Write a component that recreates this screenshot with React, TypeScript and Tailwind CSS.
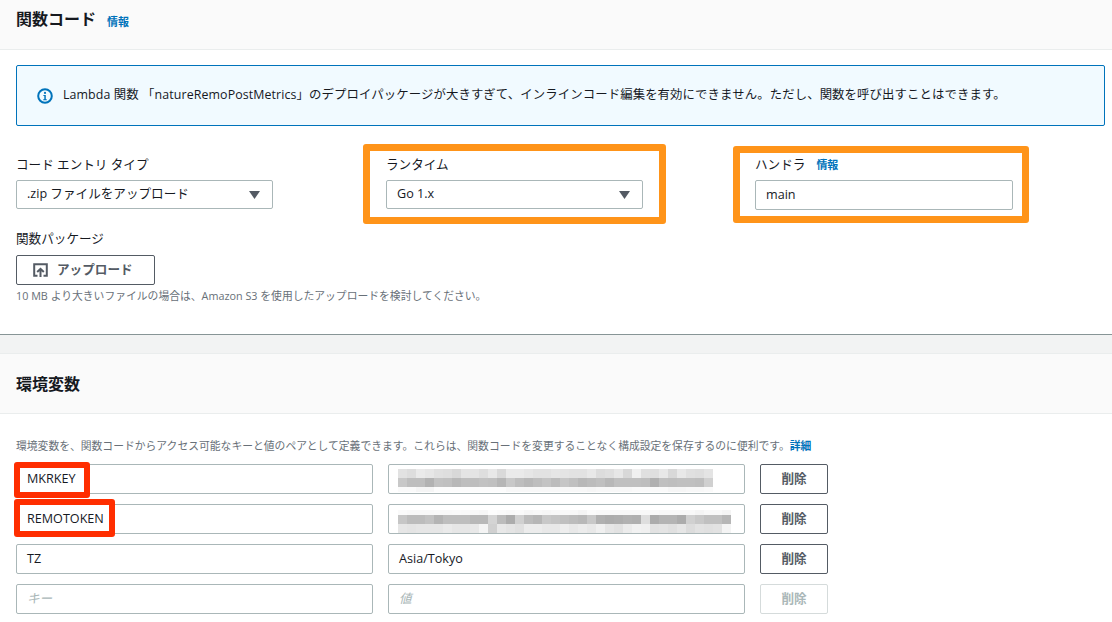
const font = { fontFamily: '"Open Sans", "Noto Sans CJK JP", sans-serif' }

const blurOne = [
  [0xe2, 0xdd, 0xea, 0xe6, 0xe0, 0xde, 0xd8, 0xe4, 0xe4, 0xde, 0xe8, 0xd9, 0xea, 0xea, 0xe6, 0xe2, 0xe2, 0xe6, 0xe4, 0xe2, 0xe2, 0xe8, 0xdc, 0xdf, 0xe7, 0xd8, 0xf0, 0xe0, 0xdf, 0xe8, 0xd8, 0xe8, 0xe0, 0xde, 0xe4],
  [0xc8, 0xbe, 0xbe, 0xb2, 0xc2, 0xc0, 0xb8, 0xbe, 0xbe, 0xc2, 0xc0, 0xb6, 0xc8, 0xbe, 0xb8, 0xbe, 0xc4, 0xbc, 0xc6, 0xc0, 0xb8, 0xbc, 0xc0, 0xb8, 0xc0, 0xc0, 0xc0, 0xbe, 0xb0, 0xc0, 0xbe, 0xc0, 0xc0, 0xbe, 0xd0],
  [0xfa, 0xfa, 0xf5, 0xf5, 0xfc, 0xfc, 0xfc, 0xfc, 0xfc, 0xfc, 0xfc, 0xfc, 0xf8, 0xf8, 0xf8, 0xf8, 0xf8, 0xf8, 0xf8, 0xf8, 0xf8, 0xf6, 0xf8, 0xf8, 0xf8, 0xf8, 0xfa, 0xfa, 0xfa, 0xfa, 0xf6, 0xf6, 0xf8, 0xf8, 0xfa],
]

const blurTwo = [
  [0xfa, 0xf8, 0xf8, 0xf8, 0xf9, 0xf9, 0xfa, 0xf9, 0xf8, 0xf6, 0xfc, 0xfa, 0xf8, 0xfa, 0xf6, 0xf8, 0xf6, 0xf8, 0xf8, 0xf8, 0xf4, 0xfa, 0xf8, 0xf8, 0xf8, 0xf8, 0xf8, 0xf8, 0xfa, 0xf8, 0xf8, 0xf8, 0xf8, 0xf4, 0xf8, 0xf8, 0xf4],
  [0xc6, 0xbc, 0xbc, 0xc2, 0xb4, 0xbe, 0xbe, 0xbe, 0xb8, 0xb8, 0xd4, 0xbc, 0xac, 0xd0, 0xbc, 0xb6, 0xc8, 0xc4, 0xc0, 0xbc, 0xb8, 0xc8, 0xb0, 0xac, 0xae, 0xb2, 0xb0, 0xde, 0xac, 0xb4, 0xb4, 0xac, 0xd0, 0xc8, 0xc0, 0xc0, 0xb6],
  [0xe6, 0xe4, 0xe6, 0xe6, 0xe6, 0xea, 0xe6, 0xe6, 0xe8, 0xf4, 0xd0, 0xe8, 0xe4, 0xe0, 0xec, 0xec, 0xe8, 0xe8, 0xee, 0xe8, 0xec, 0xe8, 0xf0, 0xe6, 0xe2, 0xec, 0xf2, 0xf0, 0xe2, 0xe4, 0xe0, 0xe6, 0xdc, 0xe2, 0xe0, 0xe2, 0xf4],
]

function Blur({ rows, top, heights }: { rows: number[][]; top: number; heights: number[] }) {
  let y = top
  return (
    <svg className="absolute left-[9px] top-0" width="345" height="28">
      {rows.map((row, r) => {
        const rowY = y
        y += heights[r]
        return row.map((v, c) => (
          <rect
            key={`${r}-${c}`}
            x={c * 9}
            y={rowY}
            width="9"
            height={heights[r]}
            fill={`rgb(${v},${v},${v})`}
          />
        ))
      })}
    </svg>
  )
}

function Caret() {
  return (
    <svg width="11" height="8" viewBox="0 0 11 8" className="shrink-0">
      <path d="M0 0h11L5.5 8z" fill="#545b64" />
    </svg>
  )
}

function InfoLink({ children }: { children: string }) {
  return <span className="text-[11px] font-bold text-[#0073bb]">{children}</span>
}

function Select({ value }: { value: string }) {
  return (
    <div className="flex h-[29px] w-[257px] items-center justify-between rounded-[2px] border border-[#aab7b8] bg-white pl-[10px] pr-[12px] text-[12.6px] text-[#16191f]">
      <span>{value}</span>
      <Caret />
    </div>
  )
}

function VarInput({ children, placeholder }: { children?: React.ReactNode; placeholder?: string }) {
  return (
    <div className="relative flex h-[30px] w-[357px] items-center rounded-[2px] border border-[#aab7b8] bg-white px-[10px] text-[12.6px] text-[#16191f]">
      {placeholder ? <span className="italic text-[#aab7b8]">{placeholder}</span> : children}
    </div>
  )
}

function DeleteButton({ disabled }: { disabled?: boolean }) {
  return (
    <div
      className={
        disabled
          ? "flex h-[30px] w-[68px] items-center justify-center rounded-[2px] border border-[#d5dbdb] bg-white text-[12.6px] font-bold text-[#aab7b8]"
          : "flex h-[30px] w-[68px] items-center justify-center rounded-[2px] border border-[#545b64] bg-white text-[12.6px] font-bold text-[#545b64]"
      }
    >
      削除
    </div>
  )
}

function VarRow({
  name,
  value,
  disabled,
  namePlaceholder,
  valuePlaceholder,
}: {
  name?: React.ReactNode
  value?: React.ReactNode
  disabled?: boolean
  namePlaceholder?: string
  valuePlaceholder?: string
}) {
  return (
    <div className="flex items-center">
      <VarInput placeholder={namePlaceholder}>{name}</VarInput>
      <div className="w-[15px]" />
      <VarInput placeholder={valuePlaceholder}>{value}</VarInput>
      <div className="w-[15px]" />
      <DeleteButton disabled={disabled} />
    </div>
  )
}

export default function App() {
  return (
    <div className="h-[622px] w-[1112px] overflow-hidden bg-white" style={font}>
      <div className="flex h-[50px] items-start gap-[11px] border-b border-[#eaeded] bg-[#fafafa] px-4 pt-[8px]">
        <h2 className="text-[16px] leading-[22px] font-bold text-[#16191f]">関数コード</h2>
        <span className="pt-[4px] leading-[16px]">
          <InfoLink>情報</InfoLink>
        </span>
      </div>

      <div className="h-[285px] border-b border-[#879596] px-4 pt-[15px]">
        <div className="flex h-[61px] w-[1089px] items-center gap-[10px] rounded-[2px] border border-[#0073bb] bg-[#f1faff] pl-[20px] text-[12.4px] text-[#16191f]">
          <svg width="16" height="16" viewBox="0 0 16 16" className="shrink-0">
            <circle cx="8" cy="8" r="6.8" fill="none" stroke="#0073bb" strokeWidth="2" />
            <circle cx="8" cy="4.9" r="1.1" fill="#0073bb" />
            <path d="M6.4 7h2.4v4.2h1v1H6.2v-1h1.1V8H6.4z" fill="#0073bb" />
          </svg>
          <span className="tracking-[0.1px]">
            Lambda 関数 「natureRemoPostMetrics」のデプロイパッケージが大きすぎて、インラインコード編集を有効にできません。ただし、関数を呼び出すことはできます。
          </span>
        </div>

        <div className="relative mt-[30px] flex">
          <div className="w-[370px]">
            <div className="pb-[7px] text-[12.6px] leading-[17px] text-[#16191f]">コード エントリ タイプ</div>
            <Select value=".zip ファイルをアップロード" />
          </div>
          <div className="w-[369px]">
            <div className="pb-[7px] text-[12.6px] leading-[17px] text-[#16191f]">ランタイム</div>
            <Select value="Go 1.x" />
          </div>
          <div>
            <div className="flex items-center gap-[11px] pb-[7px] text-[12.6px] leading-[17px] text-[#16191f]">
              ハンドラ <InfoLink>情報</InfoLink>
            </div>
            <div className="flex h-[30px] w-[258px] items-center rounded-[2px] border border-[#aab7b8] bg-white px-[10px] text-[12.6px] text-[#16191f]">
              main
            </div>
          </div>
          {/* annotation frames drawn over the form */}
          <div className="absolute left-[347px] top-[-12px] h-[80px] w-[303px] rounded-[3px] border-[7px] border-[#ff9419]" />
          <div className="absolute left-[717px] top-[-10px] h-[77px] w-[296px] rounded-[3px] border-[7px] border-[#ff9419]" />
        </div>

        <div className="mt-[20px] text-[12.6px] leading-[17px] text-[#16191f]">関数パッケージ</div>
        <div className="mt-[8px] flex h-[30px] w-[139px] items-center gap-[9px] rounded-[2px] border border-[#545b64] pl-[16px] text-[12.6px] font-bold text-[#545b64]">
          <svg width="15" height="14" viewBox="0 0 15 14" className="shrink-0">
            <path d="M4.5 12.8H1.2V1.2h12.6v11.6h-3.3" fill="none" stroke="#545b64" strokeWidth="2" />
            <path d="M7.5 14V6.2M4.2 9l3.3-3.2L10.8 9" fill="none" stroke="#545b64" strokeWidth="2" />
          </svg>
          アップロード
        </div>
        <div className="mt-[4px] text-[10.8px] leading-[14px] text-[#687078]">
          10 MB より大きいファイルの場合は、Amazon S3 を使用したアップロードを検討してください。
        </div>
      </div>

      <div className="h-[19px] border-b border-[#eaeded] bg-[#f2f3f3]" />
      <div className="flex h-[60px] items-center border-b border-[#eaeded] bg-[#fafafa] px-4">
        <h2 className="text-[16px] font-bold text-[#16191f]">環境変数</h2>
      </div>

      <div className="relative px-4 pt-[25px]">
        <p className="text-[10.8px] leading-[14px] text-[#687078]">
          環境変数を、関数コードからアクセス可能なキーと値のペアとして定義できます。これらは、関数コードを変更することなく構成設定を保存するのに便利です。
          <span className="font-bold text-[#0073bb]">詳細</span>
        </p>
        <div className="mt-[11px] flex flex-col gap-[10px]">
          <VarRow name="MKRKEY" value={<Blur rows={blurOne} top={4} heights={[9, 9, 5]} />} />
          <VarRow name="REMOTOKEN" value={<Blur rows={blurTwo} top={5} heights={[5, 9, 9]} />} />
          <VarRow name="TZ" value="Asia/Tokyo" />
          <VarRow namePlaceholder="キー" valuePlaceholder="値" disabled />
        </div>
        {/* annotation frames drawn over the form */}
        <div className="absolute left-[14px] top-[48px] h-[36px] w-[76px] rounded-[3px] border-[6px] border-[#ff2e00]" />
        <div className="absolute left-[14px] top-[85px] h-[38px] w-[101px] rounded-[3px] border-[6px] border-[#ff2e00]" />
      </div>
    </div>
  )
}
